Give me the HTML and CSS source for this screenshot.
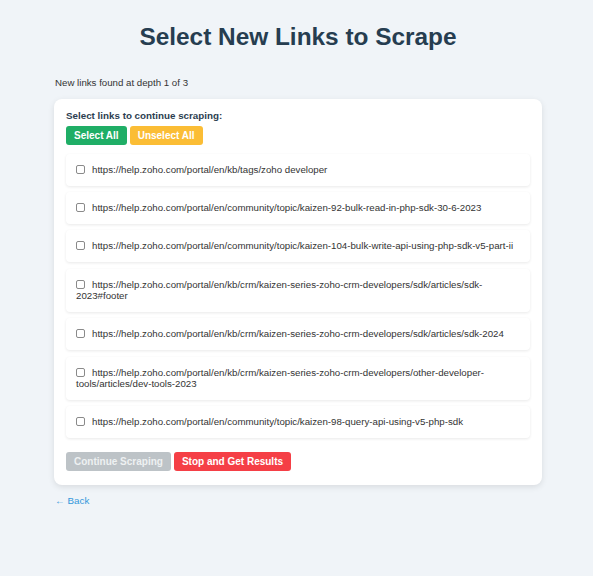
FILE: index.html
```html
<!DOCTYPE html>
<html>
<head>
<meta charset="utf-8">
<link rel="stylesheet" href="styles.css">
</head>
<body>
<div class="page">
  <h1 class="title">Select New Links to Scrape</h1>
  <p class="info">New links found at depth 1 of 3</p>
  <div class="card">
    <div class="label">Select links to continue scraping:</div>
    <div class="toolbar">
      <button class="btn btn-green">Select All</button>
      <button class="btn btn-amber">Unselect All</button>
    </div>
    <div class="links">
      <label class="link-item"><input type="checkbox" class="cb">https://help.zoho.com/portal/en/kb/tags/zoho developer</label>
      <label class="link-item"><input type="checkbox" class="cb">https://help.zoho.com/portal/en/community/topic/kaizen-92-bulk-read-in-php-sdk-30-6-2023</label>
      <label class="link-item"><input type="checkbox" class="cb">https://help.zoho.com/portal/en/community/topic/kaizen-104-bulk-write-api-using-php-sdk-v5-part-ii</label>
      <label class="link-item"><input type="checkbox" class="cb">https://help.zoho.com/portal/en/kb/crm/kaizen-series-zoho-crm-developers/sdk/articles/sdk-2023#footer</label>
      <label class="link-item"><input type="checkbox" class="cb">https://help.zoho.com/portal/en/kb/crm/kaizen-series-zoho-crm-developers/sdk/articles/sdk-2024</label>
      <label class="link-item"><input type="checkbox" class="cb">https://help.zoho.com/portal/en/kb/crm/kaizen-series-zoho-crm-developers/other-developer-tools/articles/dev-tools-2023</label>
      <label class="link-item"><input type="checkbox" class="cb">https://help.zoho.com/portal/en/community/topic/kaizen-98-query-api-using-v5-php-sdk</label>
    </div>
    <div class="actions">
      <button class="btn btn-gray" disabled>Continue Scraping</button>
      <button class="btn btn-red">Stop and Get Results</button>
    </div>
  </div>
  <a class="back" href="#">← Back</a>
</div>
</body>
</html>
```

FILE: styles.css
```css
html, body {
  margin: 0;
  padding: 0;
  background: #f0f4f8;
}
body {
  font-family: "Liberation Sans", Arial, sans-serif;
  color: #333;
}
.page {
  padding: 23px 51px 40px 54px;
}
.title {
  margin: 0;
  font-size: 24.4px;
  line-height: 28px;
  font-weight: bold;
  text-align: center;
  color: #263d50;
}
.info {
  margin: 26px 0 0 1px;
  font-size: 9.7px;
  line-height: 12px;
  color: #333;
}
.card {
  margin-top: 10px;
  background: #fff;
  border-radius: 8px;
  box-shadow: 0 2px 6px rgba(0, 0, 0, 0.1);
  padding: 11px 12px 14px 12px;
}
.label {
  font-size: 9.8px;
  line-height: 12px;
  font-weight: bold;
  color: #2c3e50;
}
.toolbar {
  display: flex;
  gap: 3px;
  margin-top: 4px;
}
.btn {
  font-family: "Liberation Sans", Arial, sans-serif;
  font-size: 10px;
  font-weight: bold;
  color: #fff;
  border: none;
  border-radius: 3px;
  height: 19px;
  padding: 0 8px;
  line-height: 19px;
  cursor: pointer;
}
.btn-green { background: #1fae66; }
.btn-amber { background: #fbbd35; }
.btn-gray { background: #bdc3c7; color: #eef1f2; }
.btn-red { background: #f53f46; }
.links {
  margin-top: 9px;
  display: flex;
  flex-direction: column;
  gap: 6.6px;
}
.link-item {
  display: block;
  background: #fff;
  border-radius: 4px;
  box-shadow: 0 1px 3px rgba(0, 0, 0, 0.09);
  padding: 10px 10px;
  font-size: 9.7px;
  line-height: 11.6px;
  color: #333;
}
.cb {
  appearance: none;
  -webkit-appearance: none;
  box-sizing: border-box;
  width: 9px;
  height: 9px;
  margin: 0 7px 0 0;
  border: 1px solid #8a8a8a;
  border-radius: 2px;
  background: #fff;
  vertical-align: -1px;
}
.actions {
  display: flex;
  gap: 3px;
  margin-top: 14px;
}
.back {
  display: block;
  margin-top: 10px;
  margin-left: 1px;
  font-size: 9.8px;
  line-height: 12px;
  color: #3498db;
  text-decoration: none;
}
```
